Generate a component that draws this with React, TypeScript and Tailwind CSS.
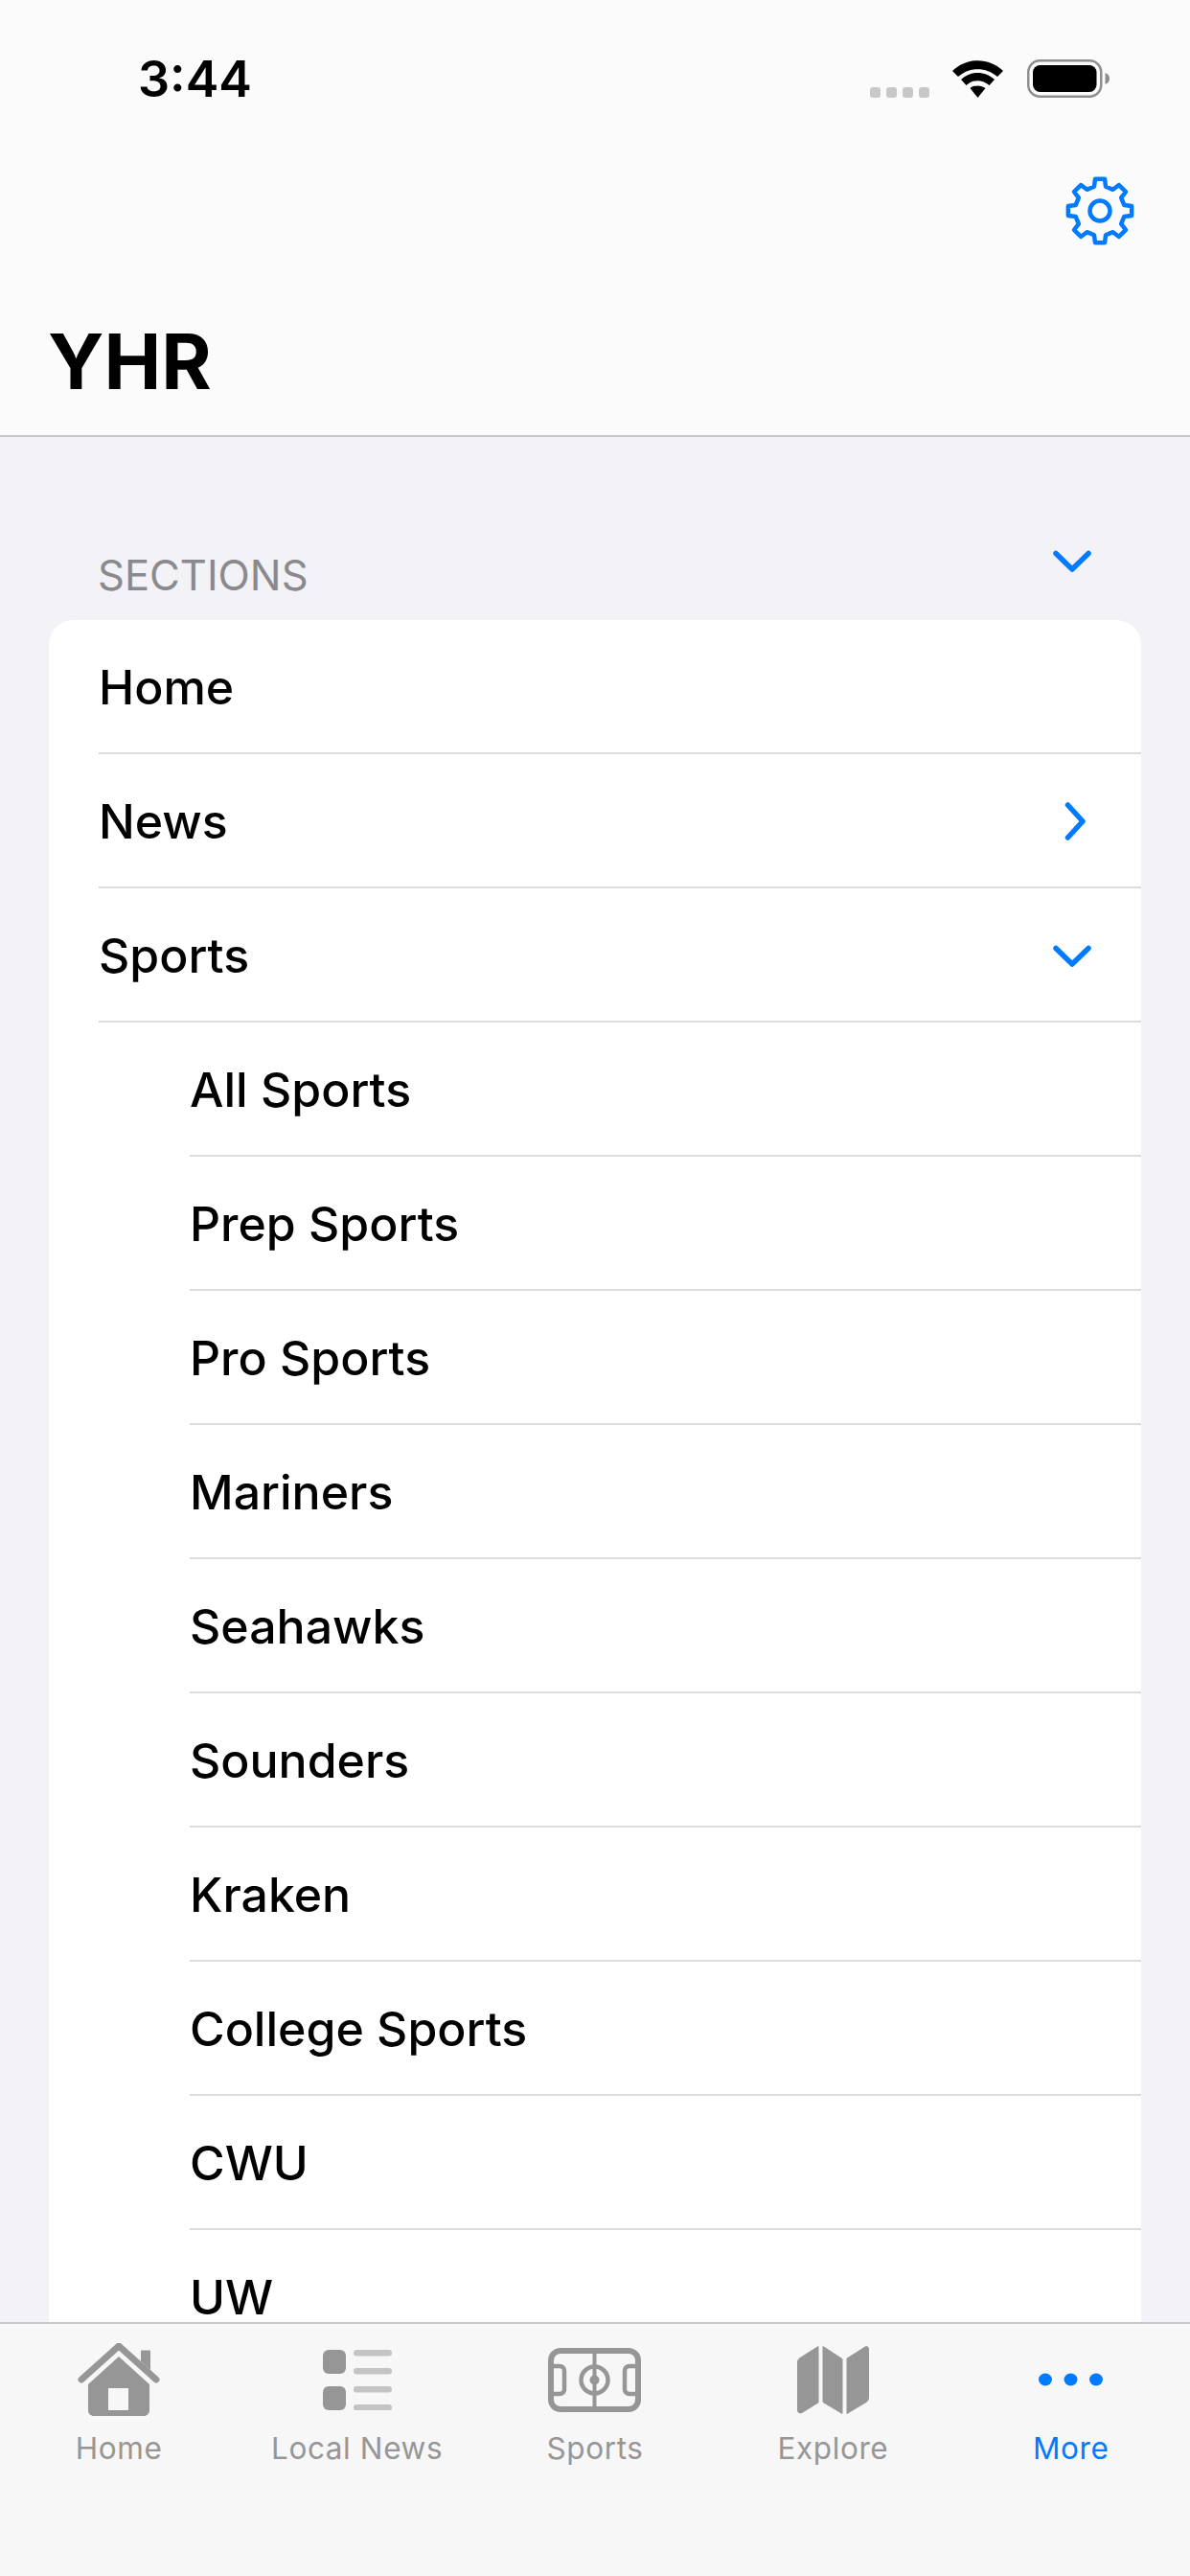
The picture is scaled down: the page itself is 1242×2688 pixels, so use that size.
const FONT = "font-['Inter','Liberation_Sans',sans-serif]";

function gearPath(cx: number, cy: number, rOut: number, rIn: number, teeth: number) {
  const pts: string[] = [];
  const step = (Math.PI * 2) / teeth;
  for (let i = 0; i < teeth; i++) {
    const a = -Math.PI / 2 + i * step;
    const p = (r: number, off: number) =>
      `${(cx + r * Math.cos(a + off)).toFixed(2)} ${(cy + r * Math.sin(a + off)).toFixed(2)}`;
    pts.push((i === 0 ? "M" : "L") + p(rIn, -0.3 * step));
    pts.push("L" + p(rOut, -0.19 * step));
    pts.push("L" + p(rOut, 0.19 * step));
    pts.push("L" + p(rIn, 0.3 * step));
  }
  return pts.join(" ") + " Z";
}

function Gear() {
  return (
    <svg width="72" height="72" viewBox="0 0 72 72" fill="none" stroke="#007aff" strokeWidth="4.5" strokeLinejoin="round">
      <path d={gearPath(36, 36, 33.5, 26, 8)} />
      <circle cx="36" cy="36" r="10.5" />
    </svg>
  );
}

function Wifi() {
  return (
    <svg width="53" height="39" viewBox="0 0 53 39" fill="#000">
      <path d="M0 11C15 -3.5 38 -3.5 53 11L47 17C35 6.5 18 6.5 6 17Z" />
      <path d="M9 20C19 10.5 34 10.5 44 20L38.5 26C31 19.5 22 19.5 14.5 26Z" />
      <path d="M18.5 29C23 25.5 30 25.5 34.5 29L26.5 39Z" />
    </svg>
  );
}

function Battery() {
  return (
    <svg width="87" height="40" viewBox="0 0 87 40" fill="none">
      <rect x="1.25" y="1.25" width="76" height="37.5" rx="12" stroke="#8e8e8e" strokeWidth="2.5" />
      <rect x="6" y="6" width="66.5" height="28" rx="7.5" fill="#000" />
      <path d="M81.5 14C84.5 15 86 17 86 20C86 23 84.5 25 81.5 26Z" fill="#8e8e8e" />
    </svg>
  );
}

function ChevronDown({ className }: { className?: string }) {
  return (
    <svg className={className} width="40" height="24" viewBox="0 0 40 24" fill="none" stroke="#007aff" strokeWidth="5.5" strokeLinecap="round" strokeLinejoin="round">
      <path d="M3 3.500L20 20L37 3.500" />
    </svg>
  );
}

function ChevronRight() {
  return (
    <svg width="22" height="40" viewBox="0 0 22 40" fill="none" stroke="#007aff" strokeWidth="5.5" strokeLinecap="round" strokeLinejoin="round">
      <path d="M3.500 3L19 20L3.500 37" />
    </svg>
  );
}

function HomeIcon() {
  return (
    <svg width="86" height="76" viewBox="0 0 86 76">
      <path d="M66 8.5C66 8 66.500 7.500 67 7.500H75C75.500 7.500 76 8 76 8.500V28L66 19Z" fill="#969696" />
      <path d="M4 38L43 3L82 38" fill="none" stroke="#969696" strokeWidth="7" strokeLinecap="round" strokeLinejoin="round" />
      <path fillRule="evenodd" d="M43 14L75 43V70C75 73.500 72.500 76 69 76H17C13.500 76 11 73.500 11 70V43ZM32 47V70H53V47Z" fill="#969696" />
    </svg>
  );
}

function ListIcon() {
  return (
    <svg width="72" height="63" viewBox="0 0 72 63">
      <rect x="0" y="0" width="24" height="25" rx="6" fill="#969696" />
      <rect x="0" y="38" width="24" height="25" rx="6" fill="#969696" />
      <rect x="32" y="0" width="40" height="6.500" rx="3" fill="#c4c4c4" />
      <rect x="32" y="19" width="40" height="6.500" rx="3" fill="#c4c4c4" />
      <rect x="32" y="38" width="40" height="6.500" rx="3" fill="#c4c4c4" />
      <rect x="32" y="57" width="40" height="6.500" rx="3" fill="#c4c4c4" />
    </svg>
  );
}

function FieldIcon() {
  return (
    <svg width="97" height="67" viewBox="0 0 97 67" fill="none" stroke="#969696">
      <rect x="3" y="3" width="91" height="61" rx="10" strokeWidth="6" />
      <path d="M48.500 3V64" strokeWidth="4" />
      <circle cx="48.500" cy="33.500" r="14" strokeWidth="4.500" />
      <circle cx="48.500" cy="33.500" r="5" fill="#969696" stroke="none" />
      <path d="M3 19H12C15 19 17 21 17 24V43C17 46 15 48 12 48H3" strokeWidth="4.500" />
      <path d="M94 19H85C82 19 80 21 80 24V43C80 46 82 48 85 48H94" strokeWidth="4.500" />
    </svg>
  );
}

function MapIcon() {
  return (
    <svg width="75" height="71" viewBox="0 0 75 71" fill="#969696" stroke="#969696" strokeWidth="1" strokeLinejoin="round">
      <path d="M0.500 17C0.500 15 1.500 13.500 3 12.500L22 0.500V59L5 69.500C3 70.500 0.500 69.500 0.500 67Z" />
      <path d="M27 0.500L47 13.500V70.500L27 58.500Z" />
      <path d="M52 13L71 1C73 0 74.500 1 74.500 3V54C74.500 56 73.500 57.500 72 58.500L52 70.500Z" />
    </svg>
  );
}

function DotsIcon() {
  return (
    <svg width="68" height="14" viewBox="0 0 68 14" fill="#007aff">
      <ellipse cx="7" cy="7" rx="7" ry="6.500" />
      <ellipse cx="33.500" cy="7" rx="7" ry="6.500" />
      <ellipse cx="60" cy="7" rx="7" ry="6.500" />
    </svg>
  );
}

function Row({ label, sub, right }: { label: string; sub?: boolean; right?: React.ReactNode }) {
  return (
    <div className={sub ? "pl-[147px]" : "pl-[52px]"}>
      <div className="flex h-[140px] items-center justify-between border-b-2 border-[#dcdcde] pt-[1px]">
        <span className="text-[50px] leading-[44px] font-medium text-black">{label}</span>
        {right}
      </div>
    </div>
  );
}

function Tab({ icon, label, active }: { icon: React.ReactNode; label: string; active?: boolean }) {
  return (
    <div className="flex flex-col items-center">
      <div className="flex h-[76px] items-center justify-center">{icon}</div>
      <span className={`mt-[14px] text-[31.5px] leading-[40px] tracking-[0.6px] ${active ? "text-[#007aff]" : "text-[#969696]"}`}>{label}</span>
    </div>
  );
}

const SUBS = ["All Sports", "Prep Sports", "Pro Sports", "Mariners", "Seahawks", "Sounders", "Kraken", "College Sports", "CWU", "UW"];

export default function App() {
  return (
    <div className={`flex h-[2688px] w-[1242px] flex-col overflow-hidden bg-[#f2f2f7] ${FONT}`}>
      <header className="h-[456px] shrink-0 border-b-2 border-[#c8c8ca] bg-[#fbfbfc]">
        <div className="flex h-[184px] items-start justify-between pr-[83px] pl-[144px]">
          <span className="mt-[50px] text-[52px] leading-[66px] font-semibold text-black">3:44</span>
          <div className="mt-[62px] flex items-start">
            <div className="mt-[29px] flex gap-[6px]">
              <span className="h-[11px] w-[11px] rounded-[3px] bg-[#c8c8c8]" />
              <span className="h-[11px] w-[11px] rounded-[3px] bg-[#c8c8c8]" />
              <span className="h-[11px] w-[11px] rounded-[3px] bg-[#c8c8c8]" />
              <span className="h-[11px] w-[11px] rounded-[3px] bg-[#c8c8c8]" />
            </div>
            <div className="mt-[1px] ml-[24px]"><Wifi /></div>
            <div className="ml-[25px]"><Battery /></div>
          </div>
        </div>
        <div className="flex justify-end pr-[58px]"><Gear /></div>
        <h1 className="mt-[74px] pl-[50px] text-[80px] leading-[94px] font-bold text-black">YHR</h1>
      </header>
      <main className="min-h-0 flex-1 overflow-hidden">
        <div className="flex h-[191px] items-start justify-between pr-[103px] pl-[102px]">
          <span className="mt-[120px] text-[43.5px] leading-[48px] text-[#8a8a8e]">SECTIONS</span>
          <ChevronDown className="mt-[118px]" />
        </div>
        <div className="mx-[51px] rounded-t-[26px] bg-white">
          <Row label="Home" />
          <Row label="News" right={<div className="mr-[58px]"><ChevronRight /></div>} />
          <Row label="Sports" right={<div className="mt-[3px] mr-[52px]"><ChevronDown /></div>} />
          {SUBS.map((s) => <Row key={s} label={s} sub />)}
        </div>
      </main>
      <nav className="grid h-[265px] shrink-0 grid-cols-5 border-t-2 border-[#c8c8ca] bg-[#f7f7f7] pt-[20px]">
        <Tab icon={<HomeIcon />} label="Home" />
        <Tab icon={<ListIcon />} label="Local News" />
        <Tab icon={<FieldIcon />} label="Sports" />
        <Tab icon={<MapIcon />} label="Explore" />
        <Tab icon={<DotsIcon />} label="More" active />
      </nav>
    </div>
  );
}
